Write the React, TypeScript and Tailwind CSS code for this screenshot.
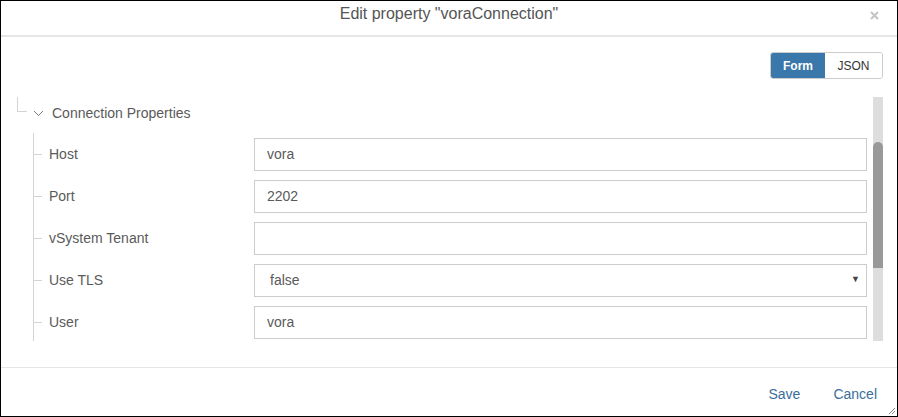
import React from 'react';

const rows: { label: string; value: string; select?: boolean }[] = [
    { label: 'Host', value: 'vora' },
    { label: 'Port', value: '2202' },
    { label: 'vSystem Tenant', value: '' },
    { label: 'Use TLS', value: 'false', select: true },
    { label: 'User', value: 'vora' },
];

export default function App() {
    return (
        <div
            className="w-[898px] h-[417px] border border-black bg-white flex flex-col overflow-hidden text-[#5a5a5a]"
            style={{ fontFamily: '"Liberation Sans", Arial, sans-serif' }}
        >
            {/* Header */}
            <div className="h-[34px] shrink-0 relative flex justify-center pt-[3px]">
                <span className="text-[16px] leading-[20px] text-[#555]">Edit property "voraConnection"</span>
                <svg className="absolute right-[18px] top-[10px]" width="9" height="9" viewBox="0 0 9 9">
                    <path d="M1 1L8 8M8 1L1 8" stroke="#c4c4c4" strokeWidth="2" />
                </svg>
            </div>
            <div className="h-[2px] shrink-0 bg-[#e5e5e5]" />

            {/* Body */}
            <div className="h-[330px] shrink-0 pl-[15px] pr-[14px] pt-[15px] flex flex-col">
                <div className="flex justify-end">
                    <div className="flex h-[27px] rounded-[3px] border border-[#ccc] overflow-hidden text-[12px]">
                        <div className="w-[54px] bg-[#3a77ab] text-white font-bold flex items-center justify-center">Form</div>
                        <div className="w-[57px] bg-white text-[#333] flex items-center justify-center">JSON</div>
                    </div>
                </div>

                <div className="mt-[18px] flex h-[244px]">
                    <div className="flex-1 overflow-hidden pl-[1px] text-[14px]">
                        {/* Tree header */}
                        <div className="h-[32px] flex items-center">
                            <div className="self-start w-[10px] h-[15px] border-l border-b border-[#d4d4d4]" />
                            <svg className="ml-[6px]" width="11" height="7" viewBox="0 0 11 7">
                                <path d="M1 1L5.5 5.5L10 1" fill="none" stroke="#777" strokeWidth="1" />
                            </svg>
                            <span className="ml-[8px]">Connection Properties</span>
                        </div>

                        {/* Children */}
                        <div className="mt-[4px] ml-[16px] border-l border-[#d4d4d4] pr-[6px]">
                            {rows.map((r) => (
                                <div key={r.label} className="h-[42px] flex items-center">
                                    <div className="w-[8px] h-px bg-[#d4d4d4]" />
                                    <span className="ml-[7px] w-[205px]">{r.label}</span>
                                    <div className="flex-1 h-[33px] border border-[#ccc] flex items-center justify-between pl-[12px] pr-[6px]">
                                        <span className={r.select ? 'pl-[3px]' : ''}>{r.value}</span>
                                        {r.select && <span className="text-[9px] text-[#444]">▼</span>}
                                    </div>
                                </div>
                            ))}
                        </div>
                    </div>

                    {/* Scrollbar */}
                    <div className="w-[10px] h-[244px] bg-[#ddd] pt-[45px]">
                        <div className="h-[126px] bg-[#999] rounded-t-[5px]" />
                    </div>
                </div>
            </div>

            <div className="h-px shrink-0 bg-[#e5e5e5]" />

            {/* Footer */}
            <div className="flex-1 relative flex items-center justify-end gap-[33px] pr-[20px] pt-[4px] text-[14px] text-[#3b6d9c]">
                <span>Save</span>
                <span>Cancel</span>
                <svg className="absolute right-[2px] bottom-[2px]" width="7" height="7" viewBox="0 0 7 7">
                    <path d="M7 1L1 7M7 4L4 7" stroke="#888" strokeWidth="1" />
                </svg>
            </div>
        </div>
    );
}
